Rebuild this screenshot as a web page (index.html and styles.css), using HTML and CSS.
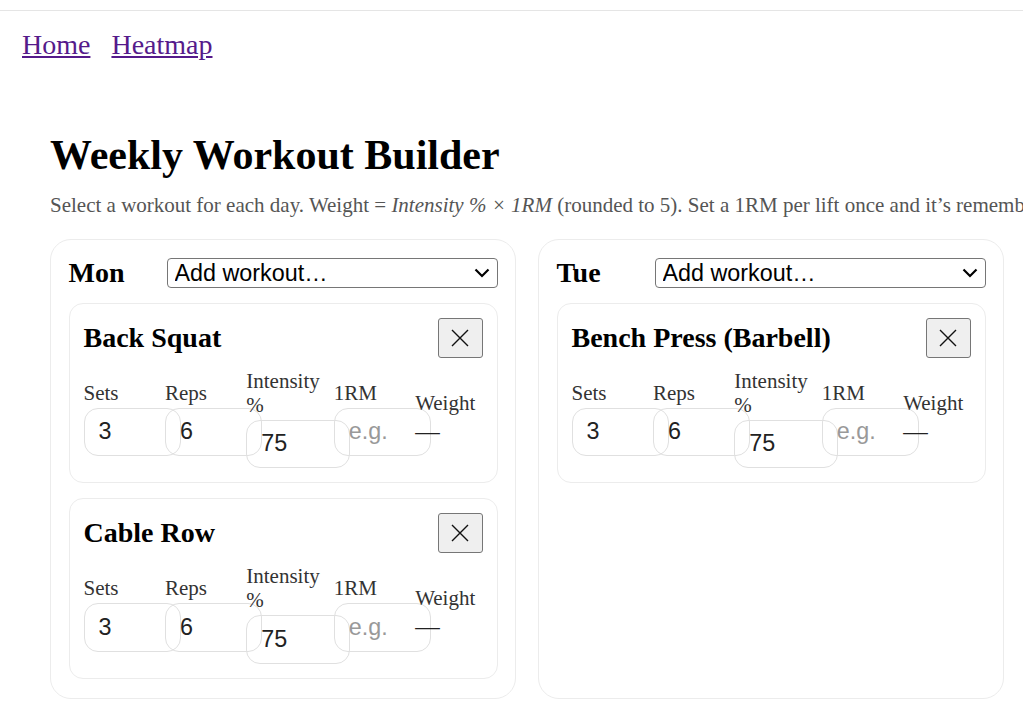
FILE: index.html
```html
<!DOCTYPE html>
<html lang="en">
<head>
<meta charset="utf-8">
<title>Weekly Workout Builder</title>
<link rel="stylesheet" href="styles.css">
</head>
<body>
<div class="topbar"></div>
<nav class="nav">
  <a href="#home">Home</a>
  <a href="#heatmap">Heatmap</a>
</nav>
<main class="main">
  <h1 class="title">Weekly Workout Builder</h1>
  <p class="subtitle">Select a workout for each day. Weight = <em>Intensity % × 1RM</em> (rounded to 5). Set a 1RM per lift once and it’s remembered.</p>
  <div class="days">
    <section class="day">
      <div class="day-head">
        <h2 class="day-name">Mon</h2>
        <div class="select-wrap">
          <select class="day-select"><option>Add workout…</option></select>
          <svg class="chev" width="16" height="10" viewBox="0 0 16 10"><path d="M1.5 1.5L8 8L14.5 1.5" stroke="#000" stroke-width="2.2" fill="none"/></svg>
        </div>
      </div>
      <div class="exercise">
        <div class="ex-head">
          <h3 class="ex-title">Back Squat</h3>
          <button class="remove" type="button" aria-label="Remove"><svg width="18" height="18" viewBox="0 0 18 18"><path d="M1 1L17 17M17 1L1 17" stroke="#111" stroke-width="1.4" fill="none"/></svg></button>
        </div>
        <div class="fields">
          <label class="field"><span class="lbl">Sets</span><input class="inp" value="3"></label>
          <label class="field"><span class="lbl">Reps</span><input class="inp" value="6"></label>
          <label class="field"><span class="lbl">Intensity %</span><input class="inp" value="75"></label>
          <label class="field"><span class="lbl">1RM</span><input class="inp" placeholder="e.g."></label>
          <div class="field"><span class="lbl">Weight</span><span class="val">—</span></div>
        </div>
      </div>
      <div class="exercise">
        <div class="ex-head">
          <h3 class="ex-title">Cable Row</h3>
          <button class="remove" type="button" aria-label="Remove"><svg width="18" height="18" viewBox="0 0 18 18"><path d="M1 1L17 17M17 1L1 17" stroke="#111" stroke-width="1.4" fill="none"/></svg></button>
        </div>
        <div class="fields">
          <label class="field"><span class="lbl">Sets</span><input class="inp" value="3"></label>
          <label class="field"><span class="lbl">Reps</span><input class="inp" value="6"></label>
          <label class="field"><span class="lbl">Intensity %</span><input class="inp" value="75"></label>
          <label class="field"><span class="lbl">1RM</span><input class="inp" placeholder="e.g."></label>
          <div class="field"><span class="lbl">Weight</span><span class="val">—</span></div>
        </div>
      </div>
    </section>
    <section class="day">
      <div class="day-head">
        <h2 class="day-name">Tue</h2>
        <div class="select-wrap">
          <select class="day-select"><option>Add workout…</option></select>
          <svg class="chev" width="16" height="10" viewBox="0 0 16 10"><path d="M1.5 1.5L8 8L14.5 1.5" stroke="#000" stroke-width="2.2" fill="none"/></svg>
        </div>
      </div>
      <div class="exercise">
        <div class="ex-head">
          <h3 class="ex-title">Bench Press (Barbell)</h3>
          <button class="remove" type="button" aria-label="Remove"><svg width="18" height="18" viewBox="0 0 18 18"><path d="M1 1L17 17M17 1L1 17" stroke="#111" stroke-width="1.4" fill="none"/></svg></button>
        </div>
        <div class="fields">
          <label class="field"><span class="lbl">Sets</span><input class="inp" value="3"></label>
          <label class="field"><span class="lbl">Reps</span><input class="inp" value="6"></label>
          <label class="field"><span class="lbl">Intensity %</span><input class="inp" value="75"></label>
          <label class="field"><span class="lbl">1RM</span><input class="inp" placeholder="e.g."></label>
          <div class="field"><span class="lbl">Weight</span><span class="val">—</span></div>
        </div>
      </div>
    </section>
  </div>
</main>
</body>
</html>
```
FILE: styles.css
```css
html, body {
  overflow: hidden;
}
body {
  margin: 0;
  font-family: "Liberation Serif", "Times New Roman", serif;
  color: #000;
  background: #fff;
}
.topbar {
  height: 10px;
  border-bottom: 1px solid #e5e5e5;
}
.nav {
  display: flex;
  gap: 21px;
  padding: 18px 22px 0;
  font-size: 28px;
  line-height: normal;
}
.nav a {
  color: #551a8b;
}
.main {
  padding: 0 0 0 50px;
}
.title {
  margin: 70px 0 0;
  font-size: 42px;
  font-weight: bold;
  line-height: normal;
}
.subtitle {
  margin: 14px 0 0;
  font-size: 21px;
  color: #555;
  white-space: nowrap;
  line-height: normal;
}
.days {
  display: grid;
  grid-template-columns: repeat(2, 466px);
  column-gap: 22px;
  margin-top: 21px;
}
.day {
  display: flex;
  flex-direction: column;
  gap: 15px;
  border: 1px solid #ececec;
  border-radius: 21px;
  padding: 17.5px 17.5px 19px;
}
.day-head {
  display: flex;
  align-items: center;
}
.day-name {
  margin: 0;
  width: 98px;
  flex: none;
  font-size: 28px;
  font-weight: bold;
  line-height: 30px;
}
.select-wrap {
  position: relative;
  flex: 1;
  display: flex;
}
.day-select {
  flex: 1;
  height: 30px;
  appearance: none;
  -webkit-appearance: none;
  background: #fff;
  border: 1px solid #767676;
  border-radius: 4px;
  font-family: Arial, "Liberation Sans", sans-serif;
  font-size: 23.33px;
  color: #000;
  padding: 0 30px 0 7px;
  margin: 0;
}
.chev {
  position: absolute;
  right: 8px;
  top: 10px;
  pointer-events: none;
}
.exercise {
  display: flex;
  flex-direction: column;
  gap: 11px;
  border: 1px solid #ececec;
  border-radius: 14px;
  padding: 14px;
}
.ex-head {
  display: flex;
  justify-content: space-between;
  align-items: center;
}
.ex-title {
  margin: 0;
  font-size: 28px;
  font-weight: bold;
  line-height: normal;
}
.remove {
  width: 45px;
  height: 40px;
  padding: 0;
  display: flex;
  align-items: center;
  justify-content: center;
  background: #efefef;
  border: 1px solid #767676;
  border-radius: 3px;
}
.fields {
  display: grid;
  grid-template-columns: repeat(5, 1fr);
  column-gap: 14px;
  align-items: center;
}
.field {
  display: flex;
  flex-direction: column;
  gap: 3px;
}
.lbl {
  font-size: 21px;
  color: #333;
  line-height: 24px;
}
.inp {
  width: 100%;
  box-sizing: content-box;
  height: 26.5px;
  padding: 10px 14px;
  border: 1px solid #e0e0e0;
  border-radius: 14px;
  background: transparent;
  font-family: Arial, "Liberation Sans", sans-serif;
  font-size: 23.33px;
  color: #222;
  margin: 0;
}
.inp::placeholder {
  color: #999;
}
.val {
  font-size: 24.5px;
  color: #222;
  line-height: 28px;
}
```
